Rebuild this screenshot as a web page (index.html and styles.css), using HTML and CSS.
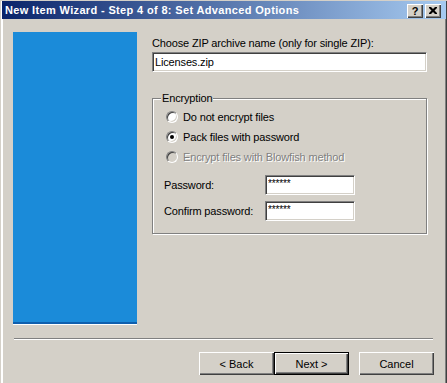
FILE: index.html
```html
<!DOCTYPE html>
<html lang="en">
<head>
    <meta charset="UTF-8">
    <title>New Item Wizard</title>
    <link rel="stylesheet" href="styles.css">
</head>
<body>
    <div class="window">
        <div class="titlebar">
            <span class="title">New Item Wizard - Step 4 of 8: Set Advanced Options</span>
            <div class="caption-btns">
                <span class="cap-btn help">?</span>
                <span class="cap-btn">
                    <svg width="8" height="7" viewBox="0 0 8 7"><path d="M0 0h2l2 2 2-2h2v1L5.5 3.5 8 6v1H6L4 5 2 7H0V6l2.5-2.5L0 1z" fill="#000"/></svg>
                </span>
            </div>
        </div>

        <div class="main">
            <div class="side-panel"></div>

            <div class="options">
                <label class="field-label">Choose ZIP archive name (only for single ZIP):</label>
                <input class="textbox wide" type="text" value="Licenses.zip">

                <div class="group">
                    <span class="group-title">Encryption</span>
                    <div class="radio-row"><span class="radio"></span>Do not encrypt files</div>
                    <div class="radio-row"><span class="radio checked"></span>Pack files with password</div>
                    <div class="radio-row disabled"><span class="radio"></span>Encrypt files with Blowfish method</div>

                    <div class="pw-row">
                        <span class="pw-label">Password:</span>
                        <input class="textbox pw" type="text" value="******">
                    </div>
                    <div class="pw-row">
                        <span class="pw-label">Confirm password:</span>
                        <input class="textbox pw" type="text" value="******">
                    </div>
                </div>
            </div>
        </div>

        <div class="rule"></div>

        <div class="buttons">
            <button class="btn">&lt; Back</button>
            <button class="btn default">Next &gt;</button>
            <button class="btn cancel">Cancel</button>
        </div>
    </div>
</body>
</html>
```

FILE: styles.css
```css
body {
    margin: 0;
    font-family: 'Liberation Sans', Arial, sans-serif;
    font-size: 11px;
    letter-spacing: -0.15px;
    color: #000;
    background: #d4d0c8;
}

.window {
    width: 447px;
    height: 383px;
    background: #d4d0c8;
    box-sizing: border-box;
    border-left: 1px solid #d4d0c8;
    box-shadow: inset 2px 0 0 #fff, inset -1px 0 0 #404040, inset -2px 0 0 #808080;
}

/* Title bar */
.titlebar {
    height: 18px;
    margin: 1px 1px 0 1px;
    padding: 0 0 0 3px;
    display: flex;
    align-items: center;
    justify-content: space-between;
    background: linear-gradient(to right, #0a246a, #a6caf0);
}

.title {
    color: #fff;
    font-weight: bold;
    font-size: 11px;
    letter-spacing: 0.35px;
}

.caption-btns {
    display: flex;
    gap: 2px;
    margin-right: 5px;
    margin-top: 1px;
}

.cap-btn {
    width: 16px;
    height: 14px;
    box-sizing: border-box;
    background: #d4d0c8;
    display: flex;
    align-items: center;
    justify-content: center;
    box-shadow: inset 1px 1px 0 #fff, inset -1px -1px 0 #404040, inset -2px -2px 0 #808080;
}

.cap-btn.help {
    font-weight: bold;
    font-size: 11px;
    line-height: 14px;
}

/* Main area */
.main {
    display: flex;
    padding: 13px 0 0 12px;
}

.side-panel {
    width: 124px;
    height: 290px;
    background: #1b8bd9;
    border-bottom: 2px solid #0f5fae;
    box-shadow: 0 1px 0 #fff;
}

.options {
    width: 275px;
    margin-left: 15px;
    display: flex;
    flex-direction: column;
}

.field-label {
    margin-top: 5px;
    line-height: 13px;
}

.textbox {
    box-sizing: border-box;
    height: 20px;
    margin: 0;
    padding: 0 2px;
    background: #fff;
    font-family: 'Liberation Sans', Arial, sans-serif;
    font-size: 11px;
    letter-spacing: -0.15px;
    color: #000;
    border: 1px solid;
    border-color: #808080 #fff #fff #808080;
    box-shadow: inset 1px 1px 0 #404040, inset -1px -1px 0 #d4d0c8;
    outline: none;
}

.textbox.wide {
    width: 275px;
    margin-top: 2px;
}

/* Group box */
.group {
    position: relative;
    margin-top: 26px;
    height: 136px;
    box-sizing: border-box;
    border: 1px solid #808080;
    box-shadow: inset 1px 1px 0 #fff, 1px 1px 0 #fff;
    padding: 8px 0 0 13px;
}

.group-title {
    position: absolute;
    top: -7px;
    left: 8px;
    padding: 0 1px;
    line-height: 13px;
    background: #d4d0c8;
}

.radio-row {
    display: flex;
    align-items: center;
    height: 20px;
}

.radio-row.disabled {
    color: #808080;
    text-shadow: 1px 1px 0 #fff;
}

.radio {
    position: relative;
    width: 12px;
    height: 12px;
    box-sizing: border-box;
    border-radius: 50%;
    border: 1px solid;
    border-color: #808080 #fff #fff #808080;
    box-shadow: inset 1px 1px 0 #404040, inset -1px -1px 0 #d4d0c8;
    background: #fff;
    margin-right: 5px;
}

.radio-row.disabled .radio {
    background: #d4d0c8;
}

.radio.checked::after {
    content: "";
    position: absolute;
    left: 3px;
    top: 3px;
    width: 4px;
    height: 4px;
    border-radius: 50%;
    background: #000;
}

.pw-row {
    display: flex;
    align-items: center;
    margin-left: -2px;
}

.radio-row.disabled + .pw-row {
    margin-top: 8px;
}

.pw-row + .pw-row {
    margin-top: 6px;
}

.pw-label {
    width: 101px;
}

.textbox.pw {
    width: 90px;
    font-size: 10px;
    padding-bottom: 3px;
}

/* Bottom */
.rule {
    margin: 14px 0 0 13px;
    width: 419px;
    height: 0;
    border-top: 1px solid #808080;
    border-bottom: 1px solid #fff;
}

.buttons {
    display: flex;
    justify-content: flex-end;
    margin: 12px 13px 0 0;
}

.btn {
    width: 75px;
    height: 23px;
    box-sizing: border-box;
    margin: 0;
    padding: 0;
    border: none;
    background: #d4d0c8;
    font-family: 'Liberation Sans', Arial, sans-serif;
    font-size: 11px;
    color: #000;
    box-shadow: inset 1px 1px 0 #fff, inset -1px -1px 0 #404040, inset -2px -2px 0 #808080;
}

.btn.default {
    border: 1px solid #000;
}

.btn.cancel {
    margin-left: 10px;
}
```
